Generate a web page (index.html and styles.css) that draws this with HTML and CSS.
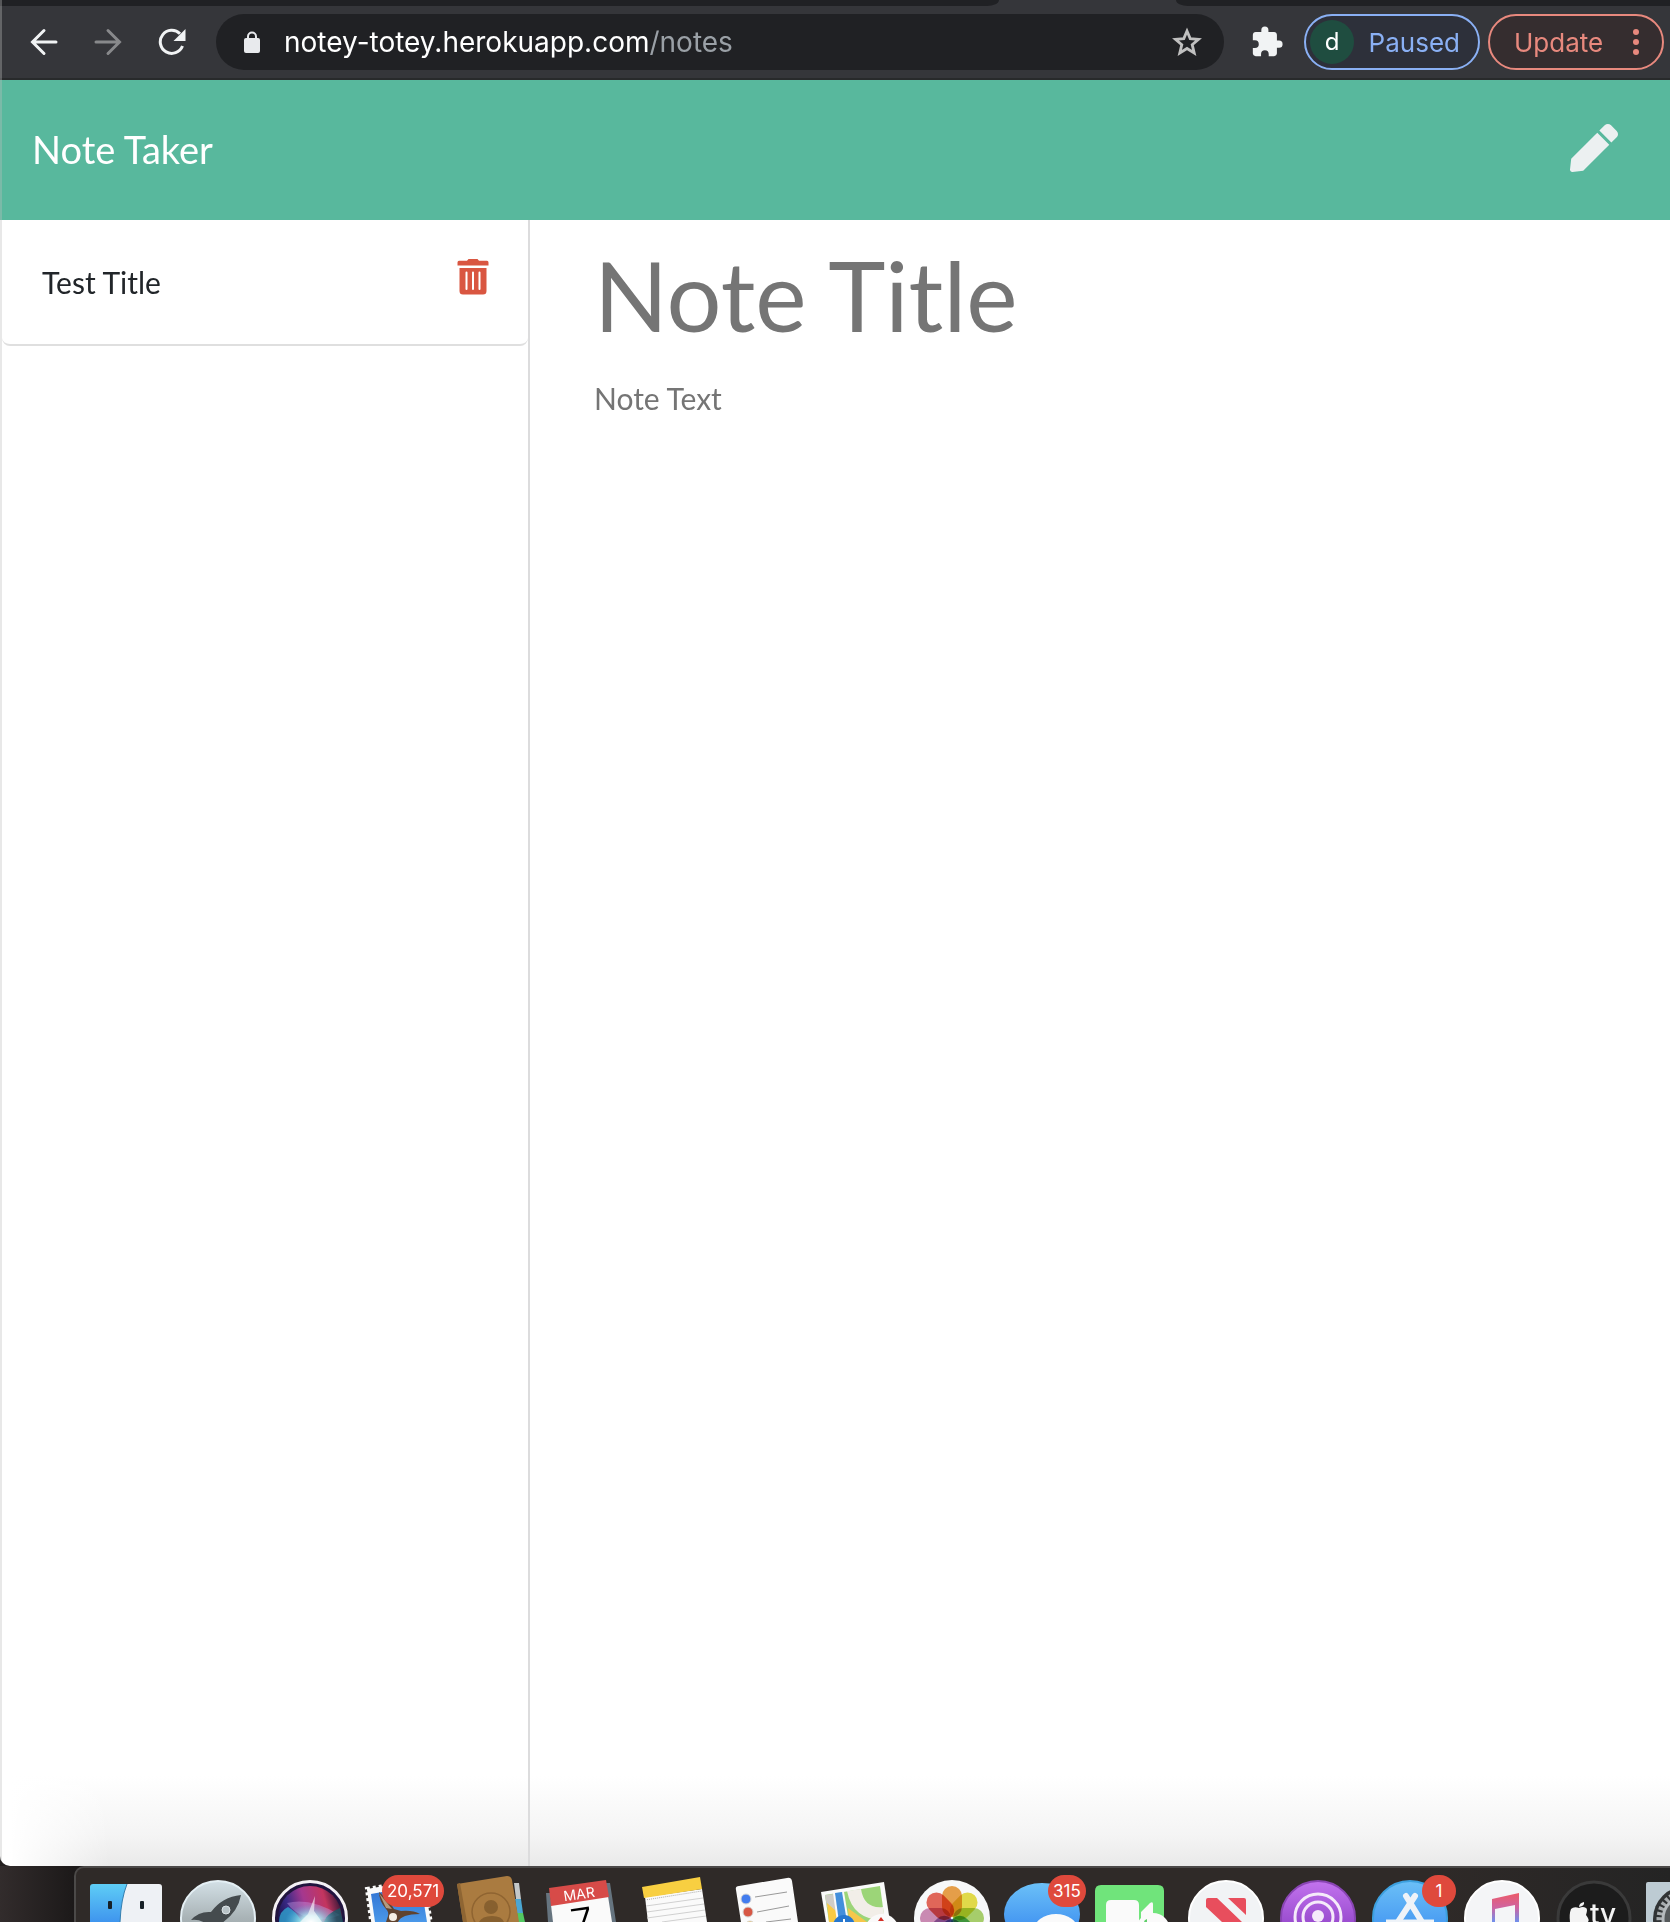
FILE: index.html
```html
<!DOCTYPE html>
<html lang="en">
<head>
<meta charset="utf-8">
<meta name="viewport" content="width=device-width, initial-scale=1">
<title>Note Taker</title>
<link rel="stylesheet" href="styles.css">
</head>
<body>
<div class="window">
  <div class="tabstrip"><span class="tab-edge tab-edge-left"></span><span class="tab-active"></span><span class="tab-edge tab-edge-right"></span></div>
  <div class="toolbar">
    <nav class="nav-buttons" aria-label="Browser">
      <button class="icon-button" aria-label="Back"><svg width="28" height="28" viewBox="0 0 28 28"><path d="M26 14H3M14 2.500L2.500 14L14 25.500" fill="none" stroke="#f1f3f4" stroke-width="3" stroke-linecap="round"/></svg></button>
      <button class="icon-button" aria-label="Forward"><svg width="28" height="28" viewBox="0 0 28 28"><path d="M2 14H25M14 2.500L25.500 14L14 25.500" fill="none" stroke="#88898b" stroke-width="3" stroke-linecap="round"/></svg></button>
      <button class="icon-button" aria-label="Reload"><svg width="28" height="28" viewBox="0 0 28 28"><path d="M24.500 18A11.500 11.500 0 1 1 22 5.800" fill="none" stroke="#f1f3f4" stroke-width="3"/><path d="M27.500 1V13H15.500Z" fill="#f1f3f4"/></svg></button>
    </nav>
    <div class="omnibox">
      <svg width="16" height="22" viewBox="0 0 16 22"><rect y="7" width="16" height="15" rx="2" fill="#e8eaed"/><path d="M4 8V5.500A4 4 0 0 1 12 5.500V8" fill="none" stroke="#e8eaed" stroke-width="2"/></svg>
      <div class="url">notey-totey.herokuapp.com<span class="url-path">/notes</span></div>
      <button class="icon-button" aria-label="Bookmark"><svg width="30" height="30" viewBox="0 0 30 30"><path d="M15 4L18.200 11.600L26.500 12.300L20.200 17.700L22.200 26L15 21.500L7.800 26L9.800 17.700L3.500 12.300L11.800 11.600Z" fill="none" stroke="#c0c0c0" stroke-width="2.800"/></svg></button>
    </div>
    <button class="icon-button" aria-label="Extensions"><svg width="34" height="34" viewBox="0 0 24 24"><path fill="#f1f3f4" d="M20.500 11H19V7c0-1.100-.9-2-2-2h-4V3.500a2.500 2.500 0 0 0-5 0V5H4c-1.100 0-2 .9-2 2v3.800h1.500a2.700 2.700 0 0 1 0 5.400H2V20c0 1.100.9 2 2 2h3.800v-1.500a2.700 2.700 0 0 1 5.400 0V22H17c1.100 0 2-.9 2-2v-4h1.500a2.500 2.500 0 0 0 0-5z"/></svg></button>
    <div class="pills">
      <button class="pill pill-paused"><span class="avatar">d</span>Paused</button>
      <button class="pill pill-update">Update<svg width="8" height="28" viewBox="0 0 8 28" fill="#e8897e"><circle cx="4" cy="4" r="3"/><circle cx="4" cy="14" r="3"/><circle cx="4" cy="24" r="3"/></svg></button>
    </div>
  </div>
  <header class="navbar">
    <a class="brand" href="#">Note Taker</a>
    <button class="icon-button" aria-label="New note"><svg width="48" height="48" viewBox="0 0 512 512"><path fill="#ecf0f1" d="M290.740 93.240l128.020 128.020-277.990 277.990-114.140 12.600C11.350 513.540-1.560 500.620.140 485.340l12.700-114.220 277.900-277.880zm207.200-19.060l-60.110-60.110c-18.750-18.750-49.160-18.750-67.910 0l-56.550 56.550 128.020 128.020 56.550-56.550c18.750-18.760 18.750-49.160 0-67.910z"/></svg></button>
  </header>
  <div class="workspace">
    <aside class="sidebar">
      <ul class="notes">
        <li class="note"><a class="note-name" href="#">Test Title</a><button class="icon-button" aria-label="Delete note"><svg width="32" height="36" viewBox="0 0 32 36" fill="#d95641"><path d="M2 1.800H10L11.500 0H20.500L22 1.800H30Q31.500 1.800 31.500 3.500V6.500H.5V3.500Q.5 1.800 2 1.800Z"/><path fill-rule="evenodd" d="M2.500 9H29.500V32Q29.500 35.500 26 35.500H6Q2.500 35.500 2.500 32ZM8.500 13.500V30Q8.500 31 9.500 31T10.500 30V13.500Q10.500 12.500 9.500 12.500T8.500 13.500ZM15 13.500V30Q15 31 16 31T17 30V13.500Q17 12.500 16 12.500T15 13.500ZM21.500 13.500V30Q21.500 31 22.500 31T23.500 30V13.500Q23.500 12.500 22.500 12.500T21.500 13.500Z"/></svg></button></li>
      </ul>
    </aside>
    <main class="editor">
      <input class="title-input" type="text" placeholder="Note Title" aria-label="Note title">
      <textarea class="text-input" placeholder="Note Text" aria-label="Note text"></textarea>
    </main>
  </div>
</div>
<footer class="desktop">
  <div class="dock">
    <div class="app"><svg width="92" height="54" viewBox="0 0 92 54"><defs><linearGradient id="finder" x2="0" y2="1"><stop stop-color="#5ecdf6"/><stop offset="1" stop-color="#3f95ee"/></linearGradient><linearGradient id="silver" x2="0" y2="1"><stop stop-color="#d3e0e6"/><stop offset=".5" stop-color="#a9b3b6"/><stop offset="1" stop-color="#8f989b"/></linearGradient></defs><path d="M10 54V19Q10 16 13 16H50V54Z" fill="url(#finder)"/><path d="M47 16H79Q82 16 82 19V54H40Q41 31 47 16Z" fill="#eef1f5"/><path d="M47 16Q41 31 40 54" fill="none" stroke="#357fae"/><rect x="28" y="33" width="4" height="8" rx="1" fill="#172027"/><rect x="60" y="33" width="4" height="8" rx="1" fill="#172027"/></svg></div>
    <div class="app"><svg width="92" height="54" viewBox="0 0 92 54"><circle cx="46" cy="50" r="37" fill="url(#silver)" stroke="#e4eff4" stroke-width="2"/><path d="M69 27Q50 29 39 44Q27 43 19 52Q27 51 33 55H50Q66 44 69 27Z" fill="#454b4e"/><circle cx="54" cy="42" r="4" fill="#b8c2c6" stroke="#dce3e6"/></svg></div>
    <div class="app"><svg width="92" height="54" viewBox="0 0 92 54"><defs><linearGradient id="siri" x1="0" y1=".5" x2="1" y2=".2"><stop stop-color="#1b1350"/><stop offset=".2" stop-color="#3a2a86"/><stop offset=".45" stop-color="#a5388f"/><stop offset=".75" stop-color="#c3355f"/><stop offset="1" stop-color="#1f1230"/></linearGradient><radialGradient id="glow"><stop stop-color="#fff"/><stop offset=".35" stop-color="#b5f3f4" stop-opacity=".9"/><stop offset="1" stop-color="#4fb8da" stop-opacity="0"/></radialGradient></defs><circle cx="46" cy="50" r="36.500" fill="#21143f" stroke="#f4f1f5" stroke-width="3"/><circle cx="46" cy="50" r="32" fill="url(#siri)"/><path d="M23 35Q46 29 76 47Q60 54 46 50Q30 46 23 35Z" fill="#c89be4" opacity=".4"/><path d="M15 54Q15 43 24 39Q32 43 38 54Z" fill="#2fa2cf" opacity=".8"/><path d="M60 54Q62 46 76 40L79 54Z" fill="#185a68" opacity=".8"/><ellipse cx="47" cy="54" rx="26" ry="18" fill="url(#glow)"/><path d="M51 28L50 43L58 54H36L44 46Z" fill="#fff" opacity=".6"/></svg></div>
    <div class="app"><svg width="92" height="54" viewBox="0 0 92 54"><defs><linearGradient id="sky" x2="0" y2="1"><stop stop-color="#2f6fd0"/><stop offset="1" stop-color="#4a98e9"/></linearGradient></defs><path d="M11 21L68 11L76 62L17 68Z" fill="#fafafa" stroke="#fafafa" stroke-width="4" stroke-dasharray="3 3"/><path d="M15 26L65 17L71 54H19Z" fill="url(#sky)"/><path d="M23 24Q23 33 30 41Q33 44 32 48L30 54H42Q45 46 64 46Q57 42 45 43L38 41Q33 32 23 24Z" fill="#60432f"/><path d="M23 25L36 41L30 40Z" fill="#b2997f"/><circle cx="37" cy="49" r="4" fill="#f5eee3"/></svg><span class="badge">20,571</span></div>
    <div class="app"><svg width="92" height="54" viewBox="0 0 92 54"><path d="M66 15H71L73 31H68Z" fill="#c4c8c9"/><path d="M67 31H73L75 45H69Z" fill="#4ba6d2"/><path d="M69 45H75L77 54H70Z" fill="#53c962"/><path d="M9 16L59 8Q63 8 64 12L71 54H15Z" fill="#aa7b40"/><path d="M9 16L12 15L19 54H15Z" fill="#8e6533"/><circle cx="43" cy="44" r="19" fill="none" stroke="#8f6431" stroke-width="1.500"/><circle cx="43" cy="39" r="7" fill="#87602f"/><path d="M31 54Q34 48 44 48T56 54Z" fill="#87602f"/></svg></div>
    <div class="app"><svg width="92" height="54" viewBox="0 0 92 54"><path d="M6 25H10L14 54H8ZM66 15H70L76 54H69Z" fill="#66747f"/><path d="M11 37L68 28L72 54H13Z" fill="#fafafa"/><path d="M9 20L66 12L69 29L11 38Z" fill="#d74b48"/><g transform="rotate(-8 40 30)" fill="#fff"><text class="mar" x="24" y="31">MAR</text></g><g transform="rotate(-8 40 50)"><text class="day" x="30" y="69">7</text></g></svg></div>
    <div class="app"><svg width="92" height="54" viewBox="0 0 92 54"><path d="M13 29L70 21L75 54H16Z" fill="#fafafa"/><path d="M10 19L68 9L70 21L12 30Z" fill="#f8cf41"/><path d="M13 32L70 23" stroke="#aaa" stroke-dasharray="1 1"/><path d="M14 38L71 30M15 44L72 36M15 50L73 42M30 54L74 48" stroke="#d0d0d0"/></svg></div>
    <div class="app"><svg width="92" height="54" viewBox="0 0 92 54"><path d="M17 54L12 22Q11 18 15 18L63 10Q67 9 68 13L74 54Z" fill="#fafafa"/><g stroke="#d6d6d6"><circle cx="22" cy="31" r="5" fill="#427cee"/><circle cx="24" cy="44" r="5" fill="#d75744"/><circle cx="26" cy="58" r="5" fill="#edb73c"/></g><path d="M31 29L63 24M33 44L65 38M42 54L67 51" stroke="#999"/></svg></div>
    <div class="app"><svg width="92" height="54" viewBox="0 0 92 54"><path d="M5 24L68 14L74 54H10Z" fill="#fafafa"/><path d="M9 27L64 18L69 54H13Z" fill="#9cd578"/><path d="M9 27L18 26L20 43L11 39Z" fill="#cfccc7"/><path d="M11 35L20 43L23 54H13Z" fill="#f9ca44"/><path d="M31 23L45 21Q48 41 67 39L69 52Q37 53 31 23Z" fill="#f2eee8"/><path d="M17 25L28 24L33 54H21Z" fill="#fafafa"/><path d="M19 25L26 24L31 54H23Z" fill="#438fdb"/><path d="M32 40L51 54H33Z" fill="#f6c74b"/><circle cx="28" cy="58" r="11" fill="#2677cf"/><path d="M28 51V54" stroke="#fff" stroke-width="2"/><circle cx="66" cy="63" r="17" fill="#fafafa"/><path d="M65 49L62 53H68Z" fill="#d32e25"/></svg></div>
    <div class="app"><svg width="92" height="54" viewBox="0 0 92 54"><circle cx="44" cy="50" r="38" fill="#f7f8f9"/><g class="petals"><rect x="34" y="18" width="20" height="31" rx="10" fill="#eda34b"/><rect x="34" y="18" width="20" height="31" rx="10" fill="#e8df4c" transform="rotate(45 44 50)"/><rect x="34" y="18" width="20" height="31" rx="10" fill="#acd36e" transform="rotate(90 44 50)"/><rect x="34" y="18" width="20" height="31" rx="10" fill="#60b98e" transform="rotate(135 44 50)"/><rect x="34" y="18" width="20" height="31" rx="10" fill="#7894ca" transform="rotate(180 44 50)"/><rect x="34" y="18" width="20" height="31" rx="10" fill="#a388c3" transform="rotate(225 44 50)"/><rect x="34" y="18" width="20" height="31" rx="10" fill="#d08eb7" transform="rotate(270 44 50)"/><rect x="34" y="18" width="20" height="31" rx="10" fill="#e8695b" transform="rotate(315 44 50)"/></g></svg></div>
    <div class="app"><svg width="92" height="54" viewBox="0 0 92 54"><defs><linearGradient id="blue" x2="0" y2="1"><stop stop-color="#6bc0f7"/><stop offset="1" stop-color="#3182ef"/></linearGradient></defs><ellipse cx="42" cy="46" rx="38" ry="31" fill="url(#blue)"/><ellipse cx="56" cy="62" rx="22" ry="16" fill="#fafafa"/></svg><span class="badge badge-messages">315</span></div>
    <div class="app"><svg width="92" height="54" viewBox="0 0 92 54"><path d="M3 54V23Q3 17 9 17H66Q72 17 72 23V54Z" fill="#70e47b"/><path d="M14 54V37Q14 32 19 32H42Q47 32 47 37V54ZM49 44L58 35Q61 33 61 36V54H49Z" fill="#fafafa"/><circle cx="61" cy="62" r="17" fill="#fafafa"/><path d="M52 54Q52 52 55 51V54Z" fill="#60cf6b"/></svg></div>
    <div class="app"><svg width="92" height="54" viewBox="0 0 92 54"><circle cx="42" cy="50" r="37" fill="#f1f3f5" stroke="#fff" stroke-width="2"/><path d="M22 32Q22 30 24 30H33L58 54H38L22 39ZM44 30H60Q62 30 62 32V47Z" fill="#e84e5d"/></svg></div>
    <div class="app"><svg width="92" height="54" viewBox="0 0 92 54"><defs><linearGradient id="violet" x2="0" y2="1"><stop stop-color="#c273ee"/><stop offset="1" stop-color="#7c30b8"/></linearGradient></defs><circle cx="42" cy="50" r="37" fill="url(#violet)" stroke="#8945b4" stroke-width="2"/><circle cx="42" cy="48" r="6" fill="#f5eafa"/><circle cx="42" cy="49" r="15" fill="none" stroke="#f5eafa" stroke-width="3"/><circle cx="42" cy="49" r="23" fill="none" stroke="#f5eafa" stroke-width="3"/></svg></div>
    <div class="app"><svg width="92" height="54" viewBox="0 0 92 54"><circle cx="42" cy="50" r="37" fill="url(#blue)" stroke="#3ca0df" stroke-width="2"/><path d="M38 28L54 54M47 28L30 54" stroke="#eef3f8" stroke-width="6" stroke-linecap="round"/><path d="M18 53H66" stroke="#eef3f8" stroke-width="3"/></svg><span class="badge badge-store">1</span></div>
    <div class="app"><svg width="92" height="54" viewBox="0 0 92 54"><defs><linearGradient id="music" x2="0" y2="1"><stop stop-color="#ed5a68"/><stop offset=".5" stop-color="#cf64a0"/><stop offset="1" stop-color="#6f8fec"/></linearGradient></defs><circle cx="42" cy="50" r="37" fill="#f4f5f7" stroke="#fff" stroke-width="2"/><path d="M32 31L59 25V54H55V37L35 41V54H32Z" fill="url(#music)"/></svg></div>
    <div class="app"><svg width="92" height="54" viewBox="0 0 92 54"><circle cx="42" cy="50" r="36" fill="#1c1c1c" stroke="#3a3a3a" stroke-width="3"/><path d="M36 54Q38 52 34 47Q36 41 34 40Q31 38 27 40Q22 38 19 41Q17 46 18 54ZM27 39Q27 35 32 34Q33 38 27 39Z" fill="#f4f4f4"/><text class="tv" x="38" y="56">tv</text></svg></div>
    <div class="app"><svg width="92" height="54" viewBox="0 0 92 54"><path d="M2 54V16Q2 14 4 14H74V54Z" fill="#bdcbd3"/><circle cx="42" cy="51" r="33" fill="#303335"/><circle cx="42" cy="51" r="26" fill="none" stroke="#a8adb0" stroke-width="7" stroke-dasharray="3 2"/><circle cx="42" cy="51" r="23" fill="#55595b" stroke="#b5babd" stroke-width="3"/></svg></div>
  </div>
</footer>
</body>
</html>
```
FILE: styles.css
```css
* { box-sizing: border-box; }

body {
  margin: 0;
  height: 100vh;
  display: flex;
  flex-direction: column;
  overflow: hidden;
  background: #231f1f;
  font-family: Lato, "Liberation Sans", sans-serif;
  font-size: 30px;
  color: #212529;
}

a { color: inherit; text-decoration: none; }

button {
  border: 0;
  padding: 0;
  background: none;
  font: inherit;
  color: inherit;
}

svg { display: block; }

.icon-button { flex: none; display: block; }

/* Browser window */
.window {
  position: relative;
  flex: 1;
  min-height: 0;
  display: flex;
  flex-direction: column;
  overflow: hidden;
  border-radius: 0 0 0 10px;
  background:
    linear-gradient(to right, #fff 10px, rgba(255, 255, 255, 0) 110px),
    linear-gradient(to top, #e9e9e9, #f4f4f4 30px, #fff 90px);
}

.window::after {
  content: "";
  position: absolute;
  inset: 0 auto 0 0;
  width: 2px;
  background: rgba(190, 190, 190, 0.35);
}

.tabstrip {
  display: flex;
  height: 6px;
  background: #35363a;
}

.tab-edge { background: #202124; }
.tab-edge-left { flex: 999; border-bottom-right-radius: 12px 6px; }
.tab-active { flex: 177; }
.tab-edge-right { flex: 494; border-bottom-left-radius: 12px 6px; }

.toolbar {
  display: flex;
  align-items: center;
  height: 74px;
  padding: 6px 6px 6px 30px;
  border-bottom: 2px solid #282a2b;
  background: #35363a;
  font-family: Inter, "Liberation Sans", sans-serif;
  font-size: 26px;
}

.nav-buttons { display: flex; gap: 36px; margin-right: 30px; }

.omnibox {
  flex: 1;
  display: flex;
  align-items: center;
  height: 56px;
  margin-right: 26px;
  padding: 0 22px 0 28px;
  border-radius: 28px;
  background: #202124;
  color: #fff;
}

.url { flex: 1; margin-left: 24px; font-size: 28px; white-space: nowrap; }
.url-path { color: #9aa0a6; }

.pills { display: flex; gap: 8px; margin-left: 20px; }

.pill {
  display: flex;
  align-items: center;
  justify-content: space-between;
  width: 176px;
  height: 56px;
  border: 2px solid;
  border-radius: 28px;
}

.pill-paused { padding: 0 18px 0 4px; color: #8ab0f4; background: #2d303a; }
.pill-update { padding: 0 22px 0 24px; color: #e8897e; background: #352d2f; }

.avatar {
  width: 44px;
  height: 44px;
  border-radius: 50%;
  background: #1f4d40;
  color: #fff;
  font-size: 24px;
  line-height: 44px;
  text-align: center;
}

/* Note app */
.navbar {
  display: flex;
  align-items: center;
  justify-content: space-between;
  height: 140px;
  padding: 0 52px 4px 32px;
  background: #58b89d;
}

.brand { padding-top: 2px; color: #fff; font-size: 38px; }

.workspace { flex: 1; display: flex; min-height: 0; }

.sidebar {
  width: 530px;
  padding-left: 2px;
  border-right: 2px solid #dcdcdd;
}

.notes { margin: 0; padding: 0; list-style: none; }

.note {
  display: flex;
  align-items: flex-start;
  justify-content: space-between;
  height: 126px;
  padding: 39px 39px 0 40px;
  border-bottom: 2px solid #dfdfdf;
  border-radius: 0 0 8px 8px;
}

.note-name { line-height: 46px; }

.editor {
  flex: 1;
  display: flex;
  flex-direction: column;
  padding: 20px 64px 0;
}

.title-input, .text-input {
  width: 100%;
  padding: 0;
  border: 0;
  outline: 0;
  background: none;
  font: inherit;
  color: inherit;
}

.title-input { height: 108px; font-size: 97px; }
.text-input { flex: 1; margin-top: 28px; line-height: 44px; resize: none; }
::placeholder { color: #757575; opacity: 1; }

/* Desktop and dock */
.desktop {
  flex: none;
  height: 56px;
  padding-left: 74px;
  background: linear-gradient(to right, #322c2c, #1c1919 74px);
}

.dock {
  display: flex;
  height: 56px;
  padding-left: 4px;
  border: 2px solid #4b4948;
  border-width: 2px 0 0 2px;
  border-top-left-radius: 10px;
  background: linear-gradient(to right, #2f2a28 0, #2f2a28 1350px, #242424);
  overflow: hidden;
}

.app { position: relative; flex: none; width: 92px; }

.badge {
  position: absolute;
  top: 7px;
  left: 26px;
  min-width: 34px;
  height: 32px;
  padding: 0 5px;
  border-radius: 16px;
  background: #df493c;
  color: #fff;
  font: 17px/32px Inter, "Liberation Sans", sans-serif;
  text-align: center;
}

.badge-messages { left: 48px; }
.badge-store { left: 54px; }

.mar { font: 14px Inter, sans-serif; }
.day { font: 300 40px Inter, sans-serif; }
.tv { font: 500 28px Inter, sans-serif; fill: #f4f4f4; }
.petals rect { mix-blend-mode: multiply; }
```
